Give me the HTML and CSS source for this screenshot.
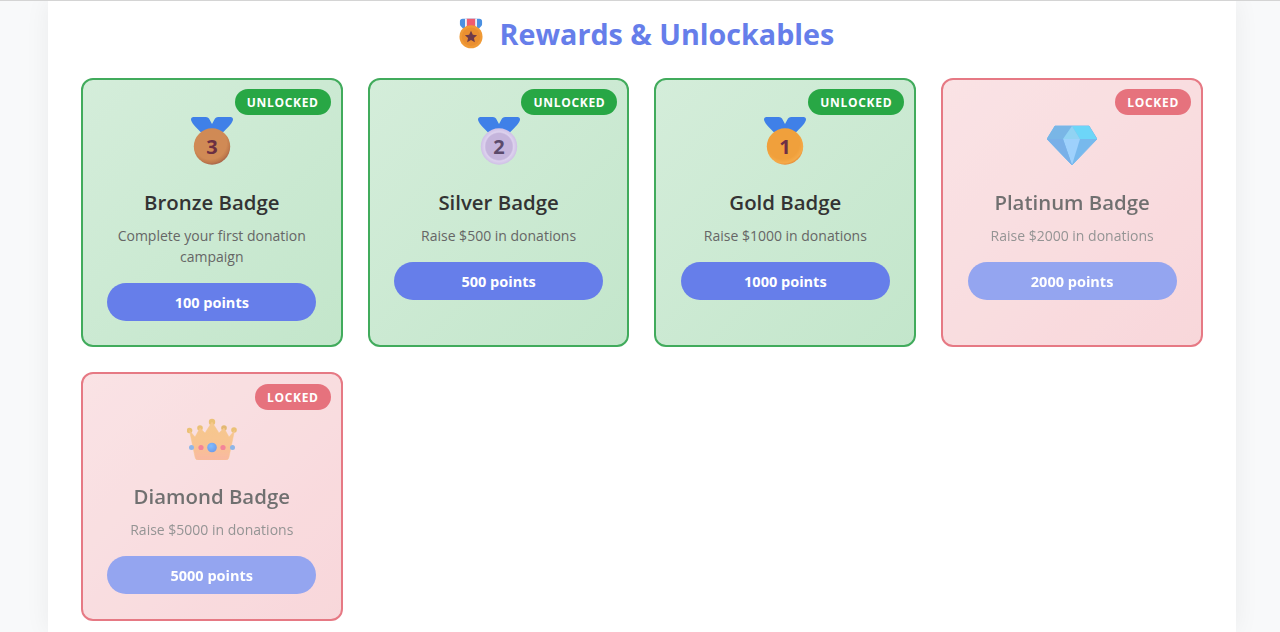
FILE: index.html
```html
<!DOCTYPE html>
<html lang="en">
<head>
<meta charset="utf-8">
<title>Rewards &amp; Unlockables</title>
<link rel="stylesheet" href="styles.css">
</head>
<body>
<svg class="defs" aria-hidden="true">
  <defs>
    <radialGradient id="bronze" cx="45%" cy="40%" r="60%">
      <stop offset="0.75" stop-color="#d08a55"/><stop offset="0.9" stop-color="#c07a4c"/><stop offset="1" stop-color="#a9654a"/>
    </radialGradient>
    <radialGradient id="silver" cx="50%" cy="50%" r="50%">
      <stop offset="0.72" stop-color="#c5b5dc"/><stop offset="0.8" stop-color="#ddd2ee"/><stop offset="1" stop-color="#cfc0e6"/>
    </radialGradient>
    <radialGradient id="gold" cx="45%" cy="40%" r="60%">
      <stop offset="0.75" stop-color="#f0a03c"/><stop offset="0.92" stop-color="#f5aa48"/><stop offset="1" stop-color="#e8913a"/>
    </radialGradient>
    <linearGradient id="crown" x1="0" y1="0" x2="0" y2="1">
      <stop offset="0" stop-color="#f2b15c"/><stop offset="0.6" stop-color="#f5aa62"/><stop offset="1" stop-color="#f69a7a"/>
    </linearGradient>
    <radialGradient id="jewel" cx="40%" cy="35%" r="70%">
      <stop offset="0" stop-color="#4aa0ff"/><stop offset="1" stop-color="#2f6fe0"/>
    </radialGradient>
  </defs>
</svg>
<main class="panel">
  <h1 class="heading">
    <svg class="heading-icon" viewBox="0 0 26 32" aria-hidden="true">
      <path d="M1 3a3 3 0 0 1 3-3h18a3 3 0 0 1 3 3v3c0 2-2 3-4 5l-3 3H8l-3-3C3 9 1 8 1 6z" fill="#4a90e2"/>
      <path d="M8 0h10v14H8z" fill="#ef5b6f"/>
      <path d="M6.500 0H8.500v14H6.500zM17.500 0h2v14h-2z" fill="#eef0f6"/>
      <circle cx="13" cy="19.500" r="12.500" fill="#f09a36"/>
      <circle cx="13" cy="19.500" r="10" fill="#ea8f30"/>
      <path d="M13 13l2 4.300 4.600.5-3.400 3.100 1 4.600-4.200-2.400-4.200 2.400 1-4.600-3.400-3.100 4.600-.5z" fill="#6e3a4a"/>
    </svg>
    <span>Rewards &amp; Unlockables</span>
  </h1>
  <section class="grid">
    <article class="card card-unlocked">
      <span class="tag">UNLOCKED</span>
      <div class="icon">
        <svg viewBox="0 0 50 50" aria-hidden="true">
          <path d="M4 3.500A2.500 2.500 0 0 1 6.500 1H19q2 0 3 1.500L25 8l3-5.500Q29 1 31 1h12.500A2.500 2.500 0 0 1 46 3.500C46 6 42 11 33 19H17C8 11 4 6 4 3.500z" fill="#3f80e8"/>
          <circle cx="25" cy="30.500" r="18.200" fill="url(#bronze)"/>
          <text class="digit" x="25" y="37.500" fill="#6b2f42">3</text>
        </svg>
      </div>
      <h2 class="title">Bronze Badge</h2>
      <p class="desc">Complete your first donation campaign</p>
      <div class="points">100 points</div>
    </article>
    <article class="card card-unlocked">
      <span class="tag">UNLOCKED</span>
      <div class="icon">
        <svg viewBox="0 0 50 50" aria-hidden="true">
          <path d="M4 3.500A2.500 2.500 0 0 1 6.500 1H19q2 0 3 1.500L25 8l3-5.500Q29 1 31 1h12.500A2.500 2.500 0 0 1 46 3.500C46 6 42 11 33 19H17C8 11 4 6 4 3.500z" fill="#3f80e8"/>
          <circle cx="25" cy="30.500" r="18.200" fill="url(#silver)"/>
          <text class="digit" x="25" y="37.500" fill="#5b4a6b">2</text>
        </svg>
      </div>
      <h2 class="title">Silver Badge</h2>
      <p class="desc">Raise $500 in donations</p>
      <div class="points">500 points</div>
    </article>
    <article class="card card-unlocked">
      <span class="tag">UNLOCKED</span>
      <div class="icon">
        <svg viewBox="0 0 50 50" aria-hidden="true">
          <path d="M4 3.500A2.500 2.500 0 0 1 6.500 1H19q2 0 3 1.500L25 8l3-5.500Q29 1 31 1h12.500A2.500 2.500 0 0 1 46 3.500C46 6 42 11 33 19H17C8 11 4 6 4 3.500z" fill="#3f80e8"/>
          <circle cx="25" cy="30.500" r="18.200" fill="url(#gold)"/>
          <text class="digit" x="25" y="37.500" fill="#6e2f45">1</text>
        </svg>
      </div>
      <h2 class="title">Gold Badge</h2>
      <p class="desc">Raise $1000 in donations</p>
      <div class="points">1000 points</div>
    </article>
    <article class="card card-locked">
      <span class="tag">LOCKED</span>
      <div class="icon">
        <svg viewBox="0 0 50 50" aria-hidden="true">
          <path d="M8 10h34l8 13-25 26L0 23z" fill="#3d9be6" stroke="#3d9be6" stroke-linejoin="round"/>
          <path d="M8 10h17l-9 13H0z" fill="#3f97dc"/>
          <path d="M25 10h17l8 13H33z" fill="#2fc4f5"/>
          <path d="M25 10l8 13H16z" fill="#62c0ee"/>
          <path d="M16 23h17l-8 26z" fill="#74bdfb"/>
          <path d="M0 23h16l9 26z" fill="#3f8fde"/>
        </svg>
      </div>
      <h2 class="title">Platinum Badge</h2>
      <p class="desc">Raise $2000 in donations</p>
      <div class="points">2000 points</div>
    </article>
    <article class="card card-locked">
      <span class="tag">LOCKED</span>
      <div class="icon">
        <svg viewBox="0 0 50 50" aria-hidden="true">
          <circle cx="25" cy="12" r="3.200" fill="#e3a63c"/>
          <circle cx="13" cy="18" r="2.800" fill="#e3a63c"/>
          <circle cx="37" cy="18" r="2.800" fill="#d79a35"/>
          <circle cx="2.500" cy="20.500" r="2.800" fill="#e3a63c"/>
          <circle cx="47" cy="20" r="2.800" fill="#e3a63c"/>
          <path d="M2.500 20.500L8 27l5-9 5 5 7-11 7 11 5-5 5 9 5.500-6.500L42 47q-.500 3-3 3H11q-2.500 0-3-3z" fill="url(#crown)" stroke="#f2b15c" stroke-width="0.500" stroke-linejoin="round"/>
          <circle cx="4.500" cy="37.500" r="2.500" fill="#5f97df"/>
          <circle cx="45.500" cy="37.500" r="2.500" fill="#5f97df"/>
          <circle cx="14" cy="37.500" r="2.600" fill="#ef4f6d"/>
          <circle cx="36" cy="37.500" r="2.600" fill="#ef4f6d"/>
          <circle cx="25" cy="37.500" r="4.800" fill="url(#jewel)"/>
        </svg>
      </div>
      <h2 class="title">Diamond Badge</h2>
      <p class="desc">Raise $5000 in donations</p>
      <div class="points">5000 points</div>
    </article>
  </section>
</main>
</body>
</html>
```
FILE: styles.css
```css
* {
  box-sizing: border-box;
}

html,
body {
  height: 100%;
}

body {
  margin: 0;
  background: #f8f9fa;
  border-top: 1px solid #d4d4d4;
  font-family: "Open Sans", "Noto Sans", sans-serif;
  color: #333;
  overflow: hidden;
}

.defs {
  position: absolute;
  width: 0;
  height: 0;
}

.panel {
  margin: 0 44px 0 48px;
  height: 100%;
  padding: 0 33px 0 32.900px;
  background: #fff;
  box-shadow: 0 0 24px rgba(0, 0, 0, 0.06);
}

.heading {
  display: flex;
  justify-content: center;
  align-items: center;
  gap: 17px;
  height: 77px;
  margin: 0;
  padding: 0 0 13px 9px;
  font-size: 28.700px;
  font-weight: 700;
  color: #667eea;
}

.heading-icon {
  width: 24px;
  height: 31px;
}

.grid {
  display: grid;
  grid-template-columns: repeat(4, 1fr);
  gap: 25px;
  align-items: stretch;
}

.card {
  position: relative;
  padding: 24px 24.500px 24.400px;
  border: 2px solid;
  border-radius: 12px;
  text-align: center;
}

.card-unlocked {
  border-color: #41ab5c;
  background: linear-gradient(135deg, #d4edda, #c3e6cb);
}

.card-locked {
  border-color: #dc3f4f;
  background: linear-gradient(135deg, #f8d7da, #f5c6cb);
  opacity: 0.7;
}

.tag {
  position: absolute;
  top: 9.300px;
  right: 10px;
  padding: 0 12px;
  height: 26px;
  line-height: 28px;
  border-radius: 13px;
  font-size: 12px;
  font-weight: 700;
  letter-spacing: 0.7px;
  color: #fff;
}

.card-unlocked .tag {
  background: #28a745;
}

.card-locked .tag {
  background: #dc3545;
}

.icon {
  display: flex;
  align-items: center;
  justify-content: center;
  height: 74px;
  margin-bottom: 11px;
}

.icon svg {
  display: block;
  width: 50px;
  height: 50px;
}

.digit {
  font-family: "Open Sans", sans-serif;
  font-size: 20px;
  font-weight: 700;
  text-anchor: middle;
}

.title {
  margin: 0 0 9px;
  font-size: 20.400px;
  line-height: 27px;
  font-weight: 600;
  color: #333;
}

.desc {
  margin: 0 0 16px;
  font-size: 14px;
  line-height: 21px;
  color: #666;
}

.points {
  height: 38px;
  line-height: 40px;
  border-radius: 19px;
  background: #667eea;
  font-size: 14.500px;
  font-weight: 700;
  color: #fff;
}
```
